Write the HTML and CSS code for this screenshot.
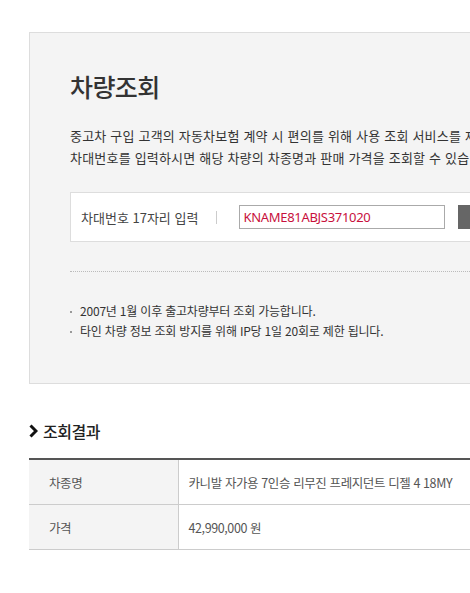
FILE: index.html
```html
<!DOCTYPE html>
<html lang="ko">
<head>
<meta charset="utf-8">
<link rel="stylesheet" href="styles.css">
</head>
<body>
<div class="page">
  <section class="search-box">
    <h1 class="title">차량조회</h1>
    <p class="desc">중고차 구입 고객의 자동차보험 계약 시 편의를 위해 사용 조회 서비스를 제공합니다.<br>차대번호를 입력하시면 해당 차량의 차종명과 판매 가격을 조회할 수 있습니다.</p>
    <div class="form-row">
      <span class="label">차대번호 17자리 입력</span>
      <span class="sep"></span>
      <input class="vin" type="text" value="KNAME81ABJS371020">
      <button class="btn" type="button">조회</button>
    </div>
    <hr class="dots">
    <ul class="notes">
      <li>2007년 1월 이후 출고차량부터 조회 가능합니다.</li>
      <li>타인 차량 정보 조회 방지를 위해 IP당 1일 20회로 제한 됩니다.</li>
    </ul>
  </section>
  <h2 class="result-title"><svg class="chev" width="9" height="14" viewBox="0 0 9 14"><polyline points="1.5,1.5 7,7 1.5,12.5" fill="none" stroke="#111" stroke-width="3"/></svg>조회결과</h2>
  <table class="result">
    <tr><th>차종명</th><td>카니발 자가용 7인승 리무진 프레지던트 디젤 4 18MY</td></tr>
    <tr><th>가격</th><td>42,990,000 원</td></tr>
  </table>
</div>
</body>
</html>
```
FILE: styles.css
```css
html, body { margin: 0; padding: 0; overflow: hidden; background: #fff; }
body { font-family: "Noto Sans CJK KR", "Noto Sans", sans-serif; color: #333; }
.page { width: 1000px; padding: 32px 0 0 29px; }
.search-box {
  width: 940px;
  box-sizing: border-box;
  background: #f4f4f4;
  border: 1px solid #ddd;
  padding: 33px 40px 40px 40px;
  height: 352px;
}
.title { margin: 0; font-size: 25px; font-weight: 500; color: #333; line-height: 40px; letter-spacing: -0.6px; }
.desc { margin: 19px 0 0; font-size: 13px; line-height: 22px; color: #333; letter-spacing: 0.2px; }
.form-row {
  margin-top: 23px;
  display: flex; align-items: center;
  background: #fff; border: 1px solid #ddd;
  height: 48px; padding-left: 10px;
}
.label { font-size: 13px; color: #444; letter-spacing: 0; }
.sep { width: 1px; height: 13px; background: #ccc; margin: 0 22px 0 18px; }
.vin {
  width: 206px; height: 24px; box-sizing: border-box;
  border: 1px solid #aaa; padding: 0 3px;
  font-family: "Noto Sans", sans-serif; font-size: 13px; color: #c8103c; letter-spacing: -0.3px;
  background: #fff;
}
.btn { margin-left: 13px; width: 70px; height: 24px; border: 0; background: #666; color: #fff; font-family: inherit; font-size: 12px; }
.dots { margin: 29px 0 0; border: 0; border-top: 1px dotted #bbb; height: 0; }
.notes { margin: 29px 0 0; padding: 0; list-style: none; font-size: 12px; line-height: 20px; color: #333; letter-spacing: -0.2px; }
.notes li { position: relative; padding-left: 10px; }
.notes li::before { content: ""; position: absolute; left: 0; top: 10px; width: 2px; height: 2px; background: #999; }
.result-title { margin: 35px 0 0; display: flex; align-items: center; gap: 5px; font-size: 16px; font-weight: 500; color: #222; line-height: 24px; letter-spacing: -0.5px; }
.chev { display: block; }
.result { margin-top: 15px; width: 940px; border-collapse: collapse; border-top: 2px solid #555; font-size: 12.5px; color: #555; letter-spacing: -0.4px; }
.result th, .result td { height: 44px; border-bottom: 1px solid #ccc; text-align: left; font-weight: 400; padding: 0; }
.result th { width: 149px; background: #f4f4f4; border-right: 1px solid #ccc; padding-left: 20px; box-sizing: border-box; color: #555; }
.result td { padding-left: 10px; }
```
